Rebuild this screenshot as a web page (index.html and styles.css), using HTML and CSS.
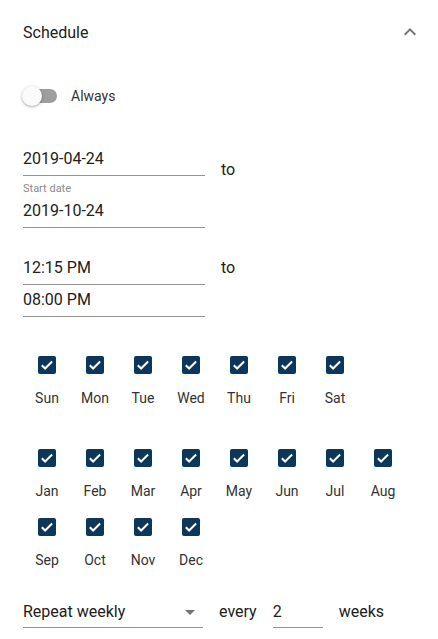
FILE: index.html
```html
<!DOCTYPE html>
<html lang="en">
<head>
  <meta charset="UTF-8">
  <meta name="viewport" content="width=device-width, initial-scale=1.0">
  <title>Schedule</title>
  <link rel="stylesheet" href="styles.css">
</head>
<body>
  <div class="panel">
    <div class="panel-header">
      <span class="panel-title">Schedule</span>
      <svg class="chevron" width="24" height="24" viewBox="0 0 24 24"><path d="M12 8l-6 6 1.41 1.41L12 10.83l4.59 4.58L18 14z"/></svg>
    </div>

    <div class="toggle-row">
      <span class="toggle"><span class="toggle-track"></span><span class="toggle-thumb"></span></span>
      <span class="toggle-label">Always</span>
    </div>

    <div class="range range--date">
      <div class="fields">
        <div class="field">2019-04-24</div>
        <div class="field-label">Start date</div>
        <div class="field field--second">2019-10-24</div>
      </div>
      <span class="range-to">to</span>
    </div>

    <div class="range range--time">
      <div class="fields">
        <div class="field">12:15 PM</div>
        <div class="field field--tight">08:00 PM</div>
      </div>
      <span class="range-to">to</span>
    </div>

    <div class="checks checks--days">
      <div class="check"><span class="box"></span><span>Sun</span></div>
      <div class="check"><span class="box"></span><span>Mon</span></div>
      <div class="check"><span class="box"></span><span>Tue</span></div>
      <div class="check"><span class="box"></span><span>Wed</span></div>
      <div class="check"><span class="box"></span><span>Thu</span></div>
      <div class="check"><span class="box"></span><span>Fri</span></div>
      <div class="check"><span class="box"></span><span>Sat</span></div>
    </div>

    <div class="checks checks--months">
      <div class="check"><span class="box"></span><span>Jan</span></div>
      <div class="check"><span class="box"></span><span>Feb</span></div>
      <div class="check"><span class="box"></span><span>Mar</span></div>
      <div class="check"><span class="box"></span><span>Apr</span></div>
      <div class="check"><span class="box"></span><span>May</span></div>
      <div class="check"><span class="box"></span><span>Jun</span></div>
      <div class="check"><span class="box"></span><span>Jul</span></div>
      <div class="check"><span class="box"></span><span>Aug</span></div>
      <div class="check"><span class="box"></span><span>Sep</span></div>
      <div class="check"><span class="box"></span><span>Oct</span></div>
      <div class="check"><span class="box"></span><span>Nov</span></div>
      <div class="check"><span class="box"></span><span>Dec</span></div>
    </div>

    <div class="repeat-row">
      <div class="select">
        <span>Repeat weekly</span>
        <span class="select-arrow"></span>
      </div>
      <span class="repeat-text">every</span>
      <div class="number">2</div>
      <span class="repeat-text">weeks</span>
    </div>
  </div>
</body>
</html>
```

FILE: styles.css
```css
body {
  margin: 0;
  font-family: Roboto, "Noto Sans", Arial, sans-serif;
  font-size: 16px;
  color: #212121;
  background: #fff;
}

.panel {
  padding: 0 16px 0 23px;
}

.panel-header {
  height: 64px;
  display: flex;
  align-items: center;
  justify-content: space-between;
}

.chevron {
  fill: #757575;
}

/* toggle */
.toggle-row {
  margin-top: 22px;
  height: 20px;
  display: flex;
  align-items: center;
}

.toggle {
  position: relative;
  width: 35px;
  height: 20px;
  margin-left: -1px;
}

.toggle-track {
  position: absolute;
  left: 5px;
  top: 3px;
  width: 30px;
  height: 14px;
  border-radius: 7px;
  background: #9e9e9e;
}

.toggle-thumb {
  position: absolute;
  left: 0;
  top: 0;
  width: 20px;
  height: 20px;
  border-radius: 50%;
  background: #fafafa;
  box-shadow: 0 1px 3px rgba(0,0,0,0.35);
}

.toggle-label {
  margin-left: 14px;
  font-size: 14px;
  color: #333;
}

/* ranges */
.range {
  display: flex;
  align-items: flex-start;
}

.range--date {
  margin-top: 43px;
}

.range--time {
  margin-top: 30px;
}

.fields {
  width: 182px;
}

.field {
  line-height: 20px;
  padding-bottom: 6px;
  border-bottom: 1px solid #949494;
}

.field--tight {
  margin-top: 5px;
}

.field-label {
  margin-top: 6px;
  font-size: 11px;
  line-height: 14px;
  color: #8a8a8a;
}

.field--second {
  margin-top: 5px;
}

.range-to {
  margin-left: 16px;
  line-height: 20px;
}

.range--date .range-to {
  margin-top: 11px;
}

/* checkboxes */
.checks {
  display: grid;
  grid-template-columns: repeat(8, 48px);
  row-gap: 17px;
}

.checks--days {
  margin-top: 39px;
}

.checks--months {
  margin-top: 41px;
}

.check {
  display: flex;
  flex-direction: column;
  align-items: center;
  gap: 14px;
  font-size: 14px;
  line-height: 20px;
  color: #333;
}

.box {
  width: 18px;
  height: 18px;
  border-radius: 2px;
  background: #0c375b url("data:image/svg+xml,%3Csvg xmlns='http://www.w3.org/2000/svg' viewBox='0 0 18 18'%3E%3Cpath d='M3.8 9.2l3.3 3.3 7-7' fill='none' stroke='%23fff' stroke-width='2'/%3E%3C/svg%3E") no-repeat center / 18px 18px;
}

/* repeat */
.repeat-row {
  margin-top: 32px;
  display: flex;
  align-items: flex-start;
}

.select {
  width: 180px;
  display: flex;
  justify-content: space-between;
  align-items: center;
  line-height: 20px;
  padding-bottom: 5px;
  border-bottom: 1px solid #949494;
}

.select-arrow {
  width: 0;
  height: 0;
  margin-right: 8px;
  border-left: 5px solid transparent;
  border-right: 5px solid transparent;
  border-top: 5px solid #757575;
}

.repeat-text {
  line-height: 20px;
  margin-left: 16px;
}

.number {
  width: 50px;
  margin-left: 16px;
  line-height: 20px;
  padding-bottom: 5px;
  border-bottom: 1px solid #949494;
}
```
